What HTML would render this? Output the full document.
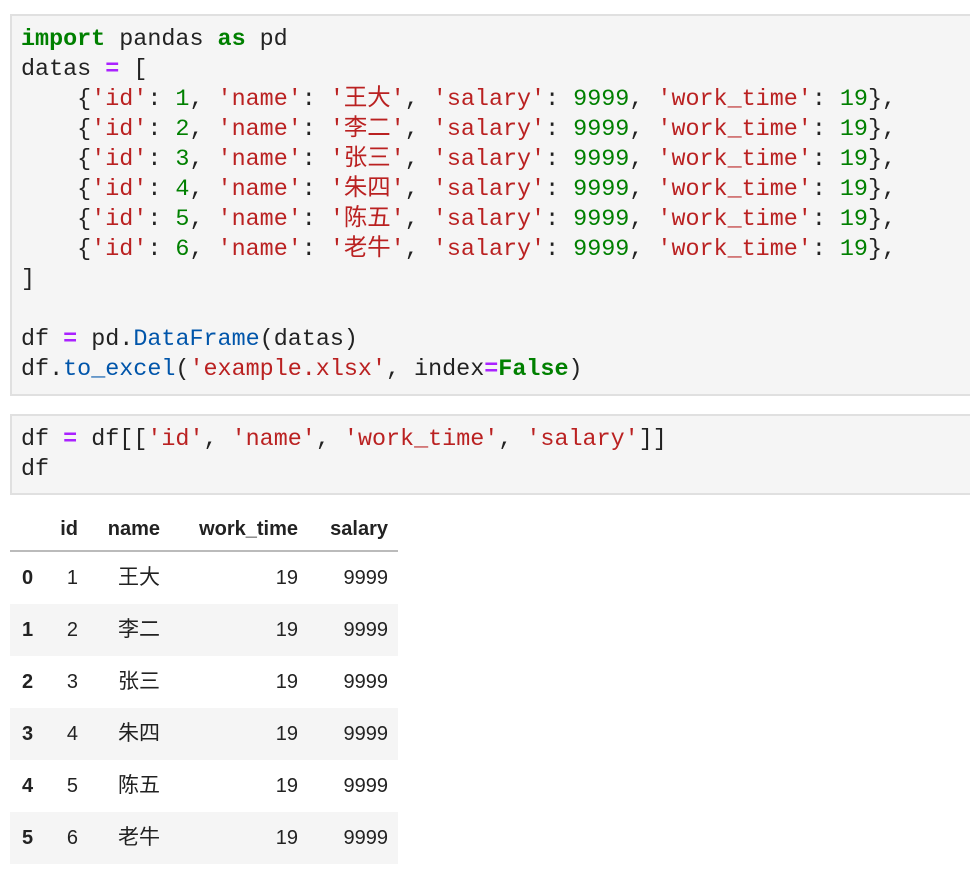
<!DOCTYPE html>
<html><head><meta charset="utf-8"><style>
body{margin:0;background:#fff;width:970px;height:888px;overflow:hidden;position:relative}
.cell{position:absolute;left:10px;width:970px;background:#f5f5f5;border:2px solid #e0e0e0;box-sizing:border-box}
pre{margin:0;position:absolute;left:9px;font-family:"Liberation Mono","Noto Sans CJK SC",monospace;font-size:23.4px;line-height:30px;color:#222}
.k{color:#008000;font-weight:bold}.s{color:#ba2121}.n{color:#008000}.o{color:#aa22ff;font-weight:bold}.f{color:#0055aa}
table{position:absolute;left:10px;top:509px;border-collapse:collapse;font-family:"Liberation Sans","Noto Sans CJK SC",sans-serif;font-size:20px;color:#222}
th{font-weight:bold;height:41px;text-align:right;padding:0 10px;border-bottom:2px solid #bbb;vertical-align:middle}
td{height:52px;text-align:right;padding:0 10px;vertical-align:middle}
td.c span{font-size:21px;position:relative;top:-2px}
tbody tr:nth-child(even){background:#f5f5f5}
td.i{font-weight:bold;text-align:left;padding-left:12px}
</style></head><body>
<div class="cell" style="top:14px;height:382px"><pre style="top:9px"><span class="k">import</span> pandas <span class="k">as</span> pd
datas <span class="o">=</span> [
    {<span class="s">'id'</span>: <span class="n">1</span>, <span class="s">'name'</span>: <span class="s">'王大'</span>, <span class="s">'salary'</span>: <span class="n">9999</span>, <span class="s">'work_time'</span>: <span class="n">19</span>},
    {<span class="s">'id'</span>: <span class="n">2</span>, <span class="s">'name'</span>: <span class="s">'李二'</span>, <span class="s">'salary'</span>: <span class="n">9999</span>, <span class="s">'work_time'</span>: <span class="n">19</span>},
    {<span class="s">'id'</span>: <span class="n">3</span>, <span class="s">'name'</span>: <span class="s">'张三'</span>, <span class="s">'salary'</span>: <span class="n">9999</span>, <span class="s">'work_time'</span>: <span class="n">19</span>},
    {<span class="s">'id'</span>: <span class="n">4</span>, <span class="s">'name'</span>: <span class="s">'朱四'</span>, <span class="s">'salary'</span>: <span class="n">9999</span>, <span class="s">'work_time'</span>: <span class="n">19</span>},
    {<span class="s">'id'</span>: <span class="n">5</span>, <span class="s">'name'</span>: <span class="s">'陈五'</span>, <span class="s">'salary'</span>: <span class="n">9999</span>, <span class="s">'work_time'</span>: <span class="n">19</span>},
    {<span class="s">'id'</span>: <span class="n">6</span>, <span class="s">'name'</span>: <span class="s">'老牛'</span>, <span class="s">'salary'</span>: <span class="n">9999</span>, <span class="s">'work_time'</span>: <span class="n">19</span>},
]

df <span class="o">=</span> pd.<span class="f">DataFrame</span>(datas)
df.<span class="f">to_excel</span>(<span class="s">'example.xlsx'</span>, index<span class="o">=</span><span class="k">False</span>)</pre></div>
<div class="cell" style="top:414px;height:81px"><pre style="top:9px">df <span class="o">=</span> df[[<span class="s">'id'</span>, <span class="s">'name'</span>, <span class="s">'work_time'</span>, <span class="s">'salary'</span>]]
df</pre></div>
<table>
<thead><tr><th style="width:20px"></th><th style="width:18px">id</th><th style="width:62px">name</th><th style="width:118px">work_time</th><th style="width:70px">salary</th></tr></thead>
<tbody>
<tr><td class="i">0</td><td>1</td><td class="c"><span>王大</span></td><td>19</td><td>9999</td></tr>
<tr><td class="i">1</td><td>2</td><td class="c"><span>李二</span></td><td>19</td><td>9999</td></tr>
<tr><td class="i">2</td><td>3</td><td class="c"><span>张三</span></td><td>19</td><td>9999</td></tr>
<tr><td class="i">3</td><td>4</td><td class="c"><span>朱四</span></td><td>19</td><td>9999</td></tr>
<tr><td class="i">4</td><td>5</td><td class="c"><span>陈五</span></td><td>19</td><td>9999</td></tr>
<tr><td class="i">5</td><td>6</td><td class="c"><span>老牛</span></td><td>19</td><td>9999</td></tr>
</tbody></table>
</body></html>
